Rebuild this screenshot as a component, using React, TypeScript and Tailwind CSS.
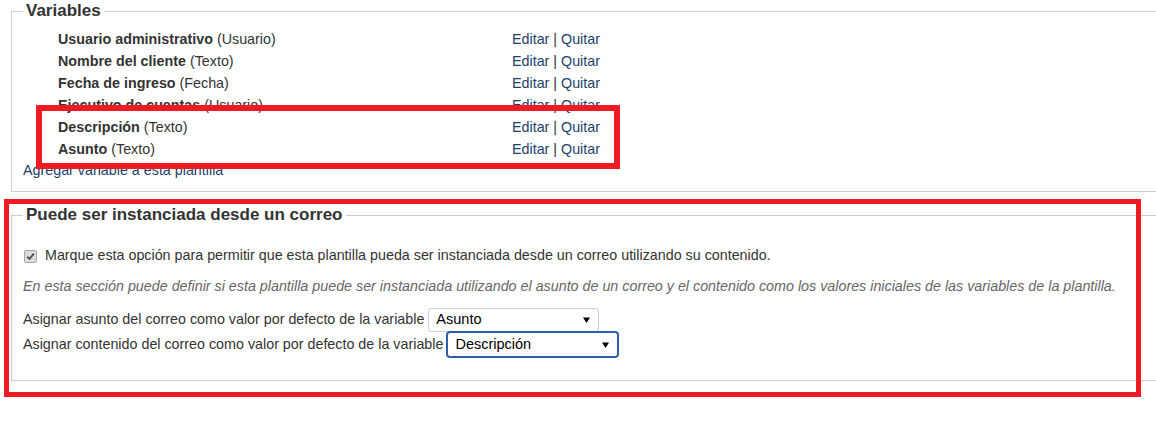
import React from "react";

const vars = [
  { name: "Usuario administrativo", type: "Usuario" },
  { name: "Nombre del cliente", type: "Texto" },
  { name: "Fecha de ingreso", type: "Fecha" },
  { name: "Ejecutivo de cuentas", type: "Usuario" },
  { name: "Descripción", type: "Texto" },
  { name: "Asunto", type: "Texto" },
];

function Select({ value, width, focused }: { value: string; width: string; focused?: boolean }) {
  return (
    <span
      className={
        "relative inline-flex items-center align-middle rounded-[3px] bg-white " +
        (focused
          ? "border border-[#2f5ea8] shadow-[0_0_0_1px_#2f5ea8] h-[25px] pl-[7px]"
          : "border border-[#cccccc] h-[24px] pl-[7px]") +
        " " +
        width
      }
    >
      <span className="text-[14.5px] text-black">{value}</span>
      <svg
        className="absolute right-[8px] top-1/2 -translate-y-1/2"
        width="7"
        height="7"
        viewBox="0 0 7 7"
      >
        <path d="M0 1 L7 1 L3.5 6.5 Z" fill="#000" />
      </svg>
    </span>
  );
}

export default function App() {
  return (
    <div
      className="relative w-[1156px] h-[422px] overflow-hidden bg-white text-[#333333] text-[14.3px]"
      style={{ fontFamily: '"Liberation Sans", Arial, sans-serif' }}
    >
      <fieldset className="ml-[11px] mt-[1px] w-[1180px] border border-[#cccccc] pl-[11px] pt-[8px] pb-[8px]">
        <legend className="px-[3px] text-[17px] leading-[20px] font-bold text-[#333333]">
          Variables
        </legend>
        <div className="flex flex-col">
          {vars.map((v) => (
            <div key={v.name} className="flex h-[22px] items-center">
              <div className="w-[489px] pl-[35px]">
                <span className="font-bold">{v.name}</span> ({v.type})
              </div>
              <div className="text-[#1d3f6b]">
                Editar <span className="text-[#333333]">|</span> Quitar
              </div>
            </div>
          ))}
          <div className="h-[22px] leading-[18px] text-[#1d3f6b]">Agregar variable a esta plantilla</div>
        </div>
      </fieldset>

      <fieldset className="ml-[11px] mt-[13px] w-[1180px] border border-[#cccccc] pl-[11px] pt-[21px] pb-[23px]">
        <legend className="px-[3px] text-[17px] leading-[20px] font-bold text-[#333333]">
          Puede ser instanciada desde un correo
        </legend>
        <div className="flex items-center h-[20px]">
          <span className="ml-[1px] mr-[8px] flex h-[13px] w-[13px] items-center justify-center rounded-[2px] border border-[#a6a6a6] bg-[#dcdcdc]">
            <svg width="9" height="9" viewBox="0 0 9 9">
              <path d="M1.2 4.6 L3.5 7 L7.8 1.6" fill="none" stroke="#4a4a4a" strokeWidth="1.8" />
            </svg>
          </span>
          <span>
            Marque esta opción para permitir que esta plantilla pueda ser instanciada desde un correo utilizando su contenido.
          </span>
        </div>
        <div className="mt-[10px] h-[20px] leading-[20px] italic text-[#666666]">
          En esta sección puede definir si esta plantilla puede ser instanciada utilizando el asunto de un correo y el contenido como los valores iniciales de las variables de la plantilla.
        </div>
        <div className="mt-[11px] flex items-center h-[25px]">
          <span className="mr-[4px]">Asignar asunto del correo como valor por defecto de la variable</span>
          <Select value="Asunto" width="w-[171px]" />
        </div>
        <div className="flex items-center h-[25px]">
          <span className="mr-[4px]">Asignar contenido del correo como valor por defecto de la variable</span>
          <Select value="Descripción" width="w-[171px]" focused />
        </div>
      </fieldset>

      <div className="pointer-events-none absolute left-[36px] top-[105px] h-[64px] w-[584px] border-[6px] border-[#ed1c24]" />
      <div className="pointer-events-none absolute left-[4px] top-[199px] h-[198px] w-[1137px] border-[5px] border-[#ed1c24]" />
    </div>
  );
}
